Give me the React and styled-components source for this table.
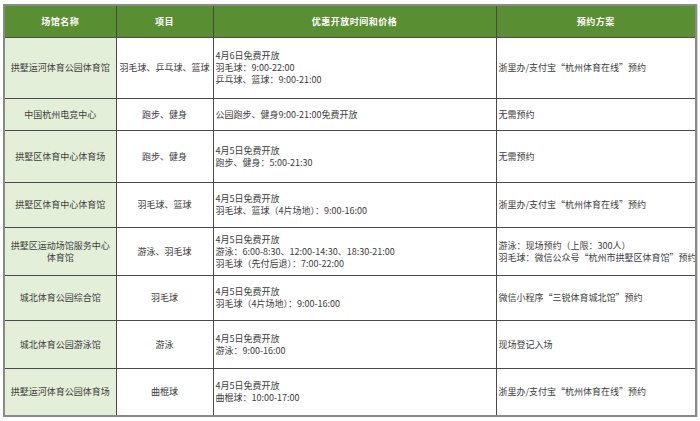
import React from "react";
import styled, { createGlobalStyle } from "styled-components";

const GlobalStyle = createGlobalStyle`
  html, body {
    margin: 0;
    padding: 0;
    background: #ffffff;
  }
  body {
    font-family: "Noto Sans CJK SC", "DejaVu Sans", sans-serif;
  }
`;

const Page = styled.div`
  padding: 4px 0 0 3px;
`;

const Table = styled.table`
  border-collapse: collapse;
  table-layout: fixed;
  width: 692px;
  border: 2px solid #8a8a8a;
  box-shadow: 1px 1px 1px rgba(0, 0, 0, 0.15);
  font-size: 9px;
  line-height: 12px;
  color: #3c3c3c;
`;

const HeadCell = styled.th`
  background: #5a8e32;
  color: #ffffff;
  font-weight: 700;
  text-align: center;
  height: 31px;
  padding: 0;
  border: 1px solid #4a4a4a;
  letter-spacing: 0.5px;
`;

const Row = styled.tr`
  height: ${({ h }) => h}px;
`;

const Cell = styled.td`
  padding: 0 ${({ align }) => (align === "left" ? "0 0 2px" : "0")};
  padding-left: ${({ align }) => (align === "left" ? "2px" : "0")};
  text-align: ${({ align }) => align || "center"};
  vertical-align: middle;
  border: 1px solid #4a4a4a;
  background: ${({ venue }) => (venue ? "#e3efd9" : "#ffffff")};
  white-space: nowrap;
  overflow: hidden;
`;

const rows = [
  {
    h: 61,
    name: ["拱墅运河体育公园体育馆"],
    sport: "羽毛球、乒乓球、篮球",
    time: ["4月6日免费开放", "羽毛球：9:00-22:00", "乒乓球、篮球：9:00-21:00"],
    book: ["浙里办/支付宝“杭州体育在线”预约"],
  },
  {
    h: 32,
    name: ["中国杭州电竞中心"],
    sport: "跑步、健身",
    time: ["公园跑步、健身9:00-21:00免费开放"],
    book: ["无需预约"],
  },
  {
    h: 52,
    name: ["拱墅区体育中心体育场"],
    sport: "跑步、健身",
    time: ["4月5日免费开放", "跑步、健身：5:00-21:30"],
    book: ["无需预约"],
  },
  {
    h: 45,
    name: ["拱墅区体育中心体育馆"],
    sport: "羽毛球、篮球",
    time: ["4月5日免费开放", "羽毛球、篮球（4片场地）：9:00-16:00"],
    book: ["浙里办/支付宝“杭州体育在线”预约"],
  },
  {
    h: 48,
    name: ["拱墅区运动场馆服务中心", "体育馆"],
    sport: "游泳、羽毛球",
    time: [
      "4月5日免费开放",
      "游泳：6:00-8:30、12:00-14:30、18:30-21:00",
      "羽毛球（先付后退）：7:00-22:00",
    ],
    book: ["游泳：现场预约（上限：300人）", "羽毛球：微信公众号“杭州市拱墅区体育馆”预约"],
  },
  {
    h: 45,
    name: ["城北体育公园综合馆"],
    sport: "羽毛球",
    time: ["4月5日免费开放", "羽毛球（4片场地）：9:00-16:00"],
    book: ["微信小程序“三锐体育城北馆”预约"],
  },
  {
    h: 48,
    name: ["城北体育公园游泳馆"],
    sport: "游泳",
    time: ["4月5日免费开放", "游泳：9:00-16:00"],
    book: ["现场登记入场"],
  },
  {
    h: 47,
    name: ["拱墅运河体育公园体育场"],
    sport: "曲棍球",
    time: ["4月5日免费开放", "曲棍球：10:00-17:00"],
    book: ["浙里办/支付宝“杭州体育在线”预约"],
  },
];

const Lines = ({ items }) =>
  items.map((t, i) => (
    <React.Fragment key={i}>
      {i > 0 && <br />}
      {t}
    </React.Fragment>
  ));

const App = () => {
  return (
    <Page lang="zh-CN">
      <GlobalStyle />
      <Table>
        <colgroup>
          <col style={{ width: 112 }} />
          <col style={{ width: 97 }} />
          <col style={{ width: 283 }} />
          <col style={{ width: 200 }} />
        </colgroup>
        <thead>
          <tr>
            <HeadCell>场馆名称</HeadCell>
            <HeadCell>项目</HeadCell>
            <HeadCell>优惠开放时间和价格</HeadCell>
            <HeadCell>预约方案</HeadCell>
          </tr>
        </thead>
        <tbody>
          {rows.map((r, i) => (
            <Row key={i} h={r.h}>
              <Cell venue>
                <Lines items={r.name} />
              </Cell>
              <Cell>{r.sport}</Cell>
              <Cell align="left">
                <Lines items={r.time} />
              </Cell>
              <Cell align="left">
                <Lines items={r.book} />
              </Cell>
            </Row>
          ))}
        </tbody>
      </Table>
    </Page>
  );
};

export default App;
